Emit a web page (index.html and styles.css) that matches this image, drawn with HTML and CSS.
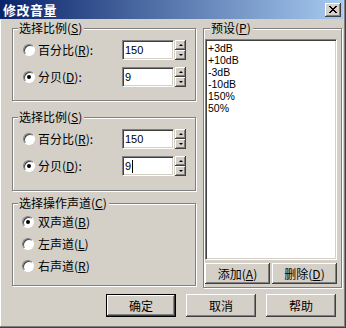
FILE: index.html
```html
<!DOCTYPE html>
<html lang="zh-CN">
<head>
  <meta charset="UTF-8" />
  <title>修改音量</title>
  <link rel="stylesheet" href="styles.css">
</head>
<body>
  <div class="window">
    <div class="titlebar">
      <span class="title">修改音量</span>
      <span class="close-btn">
        <svg width="8" height="7" viewBox="0 0 8 7" shape-rendering="crispEdges">
          <path d="M0 0h2v1H0zM6 0h2v1H6zM1 1h2v1H1zM5 1h2v1H5zM2 2h4v1H2zM3 3h2v1H3zM2 4h4v1H2zM1 5h2v1H1zM5 5h2v1H5zM0 6h2v1H0zM6 6h2v1H6z" fill="#000"/>
        </svg>
      </span>
    </div>

    <div class="content">
      <div class="columns">
        <div class="left">
          <!-- scale group 1 -->
          <div class="group g1">
            <div class="group-title">选择比例(<u>S</u>)</div>
            <div class="row first">
              <span class="radio"></span>
              <span class="label">百分比(<u>R</u>):</span>
              <span class="field">150</span>
              <span class="spin"><span class="spin-btn"><i class="up"></i></span><span class="spin-btn"><i class="down"></i></span></span>
            </div>
            <div class="row">
              <span class="radio checked"></span>
              <span class="label">分贝(<u>D</u>):</span>
              <span class="field">9</span>
              <span class="spin"><span class="spin-btn"><i class="up"></i></span><span class="spin-btn"><i class="down"></i></span></span>
            </div>
          </div>

          <!-- scale group 2 -->
          <div class="group g2">
            <div class="group-title">选择比例(<u>S</u>)</div>
            <div class="row first">
              <span class="radio"></span>
              <span class="label">百分比(<u>R</u>):</span>
              <span class="field">150</span>
              <span class="spin"><span class="spin-btn"><i class="up"></i></span><span class="spin-btn"><i class="down"></i></span></span>
            </div>
            <div class="row">
              <span class="radio checked"></span>
              <span class="label">分贝(<u>D</u>):</span>
              <span class="field">9<span class="caret"></span></span>
              <span class="spin"><span class="spin-btn"><i class="up"></i></span><span class="spin-btn"><i class="down"></i></span></span>
            </div>
          </div>

          <!-- channel group -->
          <div class="group g3">
            <div class="group-title">选择操作声道(<u>C</u>)</div>
            <div class="channel first"><span class="radio checked"></span><span class="label">双声道(<u>B</u>)</span></div>
            <div class="channel"><span class="radio"></span><span class="label">左声道(<u>L</u>)</span></div>
            <div class="channel"><span class="radio"></span><span class="label">右声道(<u>R</u>)</span></div>
          </div>
        </div>

        <div class="group presets">
          <div class="group-title">预设(<u>P</u>)</div>
          <div class="listbox">
            <div class="item">+3dB</div>
            <div class="item">+10dB</div>
            <div class="item">-3dB</div>
            <div class="item">-10dB</div>
            <div class="item">150%</div>
            <div class="item">50%</div>
          </div>
          <div class="list-buttons">
            <span class="btn small">添加(<u>A</u>)</span>
            <span class="btn small">删除(<u>D</u>)</span>
          </div>
        </div>
      </div>

      <div class="buttons">
        <span class="btn default">确定</span>
        <span class="btn">取消</span>
        <span class="btn">帮助</span>
      </div>
    </div>
  </div>
</body>
</html>
```

FILE: styles.css
```css
body {
  margin: 0;
  font-family: "Noto Sans CJK SC", "Liberation Sans", sans-serif;
  font-size: 12px;
  color: #000;
  background: #d4d0c8;
}

.window {
  width: 346px;
  height: 328px;
  box-sizing: border-box;
  padding: 0 3px 3px 0;
  background: #d4d0c8;
  box-shadow: inset -1px -1px 0 #404040, inset -2px -2px 0 #808080, inset 1px 0 0 #fff;
  overflow: hidden;
}

.titlebar {
  height: 19px;
  display: flex;
  align-items: center;
  justify-content: space-between;
  background: linear-gradient(to right, #0a246a, #a6caf0);
  padding: 0 2px 0 3px;
}

.title {
  color: #fff;
  font-weight: bold;
  font-size: 13px;
  line-height: 15px;
  letter-spacing: 0.5px;
}

.close-btn {
  width: 16px;
  height: 14px;
  box-sizing: border-box;
  display: flex;
  align-items: center;
  justify-content: center;
  background: #d4d0c8;
  box-shadow: inset -1px -1px 0 #404040, inset 1px 1px 0 #fff, inset -2px -2px 0 #808080;
}

.content {
  padding: 9px 0 0 12px;
}

.columns {
  display: flex;
  align-items: flex-start;
  gap: 7px;
}

.left {
  width: 184px;
}

/* etched group box */
.group {
  box-sizing: border-box;
  border: 1px solid #808080;
  box-shadow: inset 1px 1px 0 #fff, 1px 1px 0 #fff;
}

.group-title {
  width: fit-content;
  margin: -8px 0 0 5px;
  padding: 0 2px 0 1px;
  line-height: 14px;
  height: 14px;
  background: #d4d0c8;
}

.g1 { height: 73px; }
.g2 { height: 74px; margin-top: 16px; }
.g3 { height: 83px; margin-top: 12px; }

.row {
  display: flex;
  align-items: center;
  height: 20px;
  margin-top: 7px;
  padding-left: 10px;
}

.row.first { margin-top: 5px; }

.label {
  line-height: 14px;
  margin-left: 3px;
}

.row .label { width: 84px; }

.radio {
  width: 12px;
  height: 12px;
  box-sizing: border-box;
  border-radius: 50%;
  background: #fff;
  border: 1px solid;
  border-color: #808080 #fff #fff #808080;
  box-shadow: inset 1px 1px 0 #404040;
  display: inline-flex;
  align-items: center;
  justify-content: center;
  flex-shrink: 0;
}

.radio.checked::after {
  content: "";
  width: 4px;
  height: 4px;
  border-radius: 50%;
  background: #000;
}

.field {
  width: 52px;
  height: 20px;
  box-sizing: border-box;
  background: #fff;
  border: 1px solid;
  border-color: #808080 #fff #fff #808080;
  box-shadow: inset 1px 1px 0 #404040, inset -1px -1px 0 #d4d0c8;
  padding: 1px 2px 0;
  font-family: "Liberation Sans", sans-serif;
  font-size: 11px;
  line-height: 13px;
  display: flex;
  align-items: center;
}

.caret {
  width: 1px;
  height: 13px;
  background: #000;
  margin-left: 1px;
}

.spin {
  display: flex;
  flex-direction: column;
  margin-left: 1px;
}

.spin-btn {
  width: 11px;
  height: 10px;
  box-sizing: border-box;
  background: #d4d0c8;
  box-shadow: inset -1px -1px 0 #404040, inset 1px 1px 0 #fff, inset -2px -2px 0 #808080;
  display: flex;
  align-items: center;
  justify-content: center;
}

.spin-btn i {
  width: 0;
  height: 0;
  border-left: 2px solid transparent;
  border-right: 2px solid transparent;
}

.spin-btn .up { border-bottom: 2px solid #000; }
.spin-btn .down { border-top: 2px solid #000; }

.channel {
  display: flex;
  align-items: center;
  height: 22px;
  padding-left: 9px;
}

.channel.first { margin-top: 1px; }

.channel .label { margin-left: 4px; }

/* presets */
.presets {
  width: 139px;
  height: 260px;
  padding-left: 1px;
}

.listbox {
  width: 132px;
  height: 221px;
  box-sizing: border-box;
  margin-top: 4px;
  background: #fff;
  border: 1px solid;
  border-color: #808080 #fff #fff #808080;
  box-shadow: inset 1px 1px 0 #404040, inset -1px -1px 0 #d4d0c8;
  padding: 2px 2px 0 2px;
  font-family: "Liberation Sans", sans-serif;
  font-size: 10.5px;
}

.item {
  line-height: 12px;
  height: 12px;
}

.list-buttons {
  display: flex;
  gap: 2px;
  margin-top: 3px;
}

.btn {
  box-sizing: border-box;
  width: 70px;
  height: 23px;
  display: flex;
  align-items: center;
  justify-content: center;
  background: #d4d0c8;
  box-shadow: inset -1px -1px 0 #404040, inset 1px 1px 0 #fff, inset -2px -2px 0 #808080;
  line-height: 14px;
}

.btn.small {
  width: 65px;
  height: 21px;
}

.btn.default {
  border: 1px solid #000;
}

.buttons {
  display: flex;
  gap: 10px;
  margin-top: 6px;
  padding-left: 94px;
}
```
